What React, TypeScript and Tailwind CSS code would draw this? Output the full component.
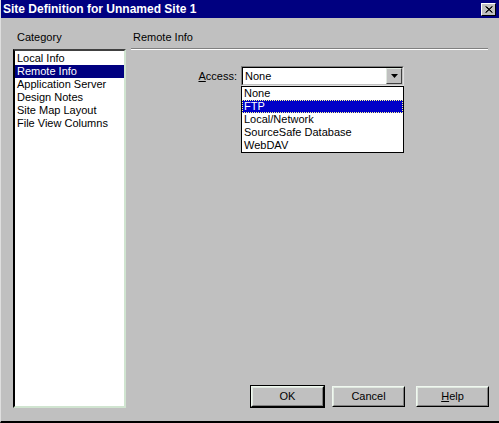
import React from 'react';

const categories = [
  'Local Info',
  'Remote Info',
  'Application Server',
  'Design Notes',
  'Site Map Layout',
  'File View Columns',
];

const accessOptions = ['None', 'FTP', 'Local/Network', 'SourceSafe Database', 'WebDAV'];

// Win9x-style raised push button
function PushButton({ children, isDefault = false, className = '' }: { children: React.ReactNode; isDefault?: boolean; className?: string }) {
  return (
    <div className={`${isDefault ? 'border border-black' : 'border border-transparent'} ${className}`}>
      <div className="h-[21px] border border-t-[#f0f8f0] border-l-[#f0f8f0] border-r-black border-b-black">
        <div className="h-full flex items-center justify-center border border-t-[#dfe8df] border-l-[#dfe8df] border-r-[#808080] border-b-[#808080] text-black">
          {children}
        </div>
      </div>
    </div>
  );
}

export default function App() {
  return (
    <div
      className="w-[499px] h-[423px] bg-[#c0c0c0] flex flex-col border-b-2 border-b-black border-l border-l-[#dfdfdf] text-[11px] leading-[13px] text-black select-none overflow-hidden"
      style={{ fontFamily: '"Liberation Sans", Arial, sans-serif' }}
    >
      {/* Title bar */}
      <div className="h-[18px] bg-[#000080] flex items-center justify-between pl-[2px] pr-[3px] shrink-0">
        <span className="text-white font-bold text-[12px] leading-[14px]">Site Definition for Unnamed Site 1</span>
        <div className="w-[15px] h-[13px] bg-[#c0c0c0] border border-t-white border-l-white border-r-black border-b-black flex items-center justify-center">
          <svg width="8" height="7" viewBox="0 0 8 7">
            <path d="M0.5 0.5 L7 6.5 M1.5 0.5 L7.5 6.5 M7 0.5 L0.5 6.5 M7.5 0.5 L1 6.5" stroke="black" strokeWidth="1" />
          </svg>
        </div>
      </div>

      {/* Body */}
      <div className="flex-1 flex">
        {/* Category column */}
        <div className="ml-[12px] w-[113px] flex flex-col pt-[13px] pb-[13px]">
          <div className="h-[18px] pl-[4px]">Category</div>
          <div className="flex-1 bg-white border-2 border-t-[#404040] border-l-black border-r-[#d0e4d0] border-b-[#d0e4d0] pt-[1px]">
            {categories.map((c, i) => (
              <div
                key={c}
                className={`h-[13px] pl-[2px] whitespace-nowrap ${i === 1 ? 'bg-[#000080] text-white' : ''}`}
              >
                {c}
              </div>
            ))}
          </div>
        </div>

        {/* Right panel */}
        <div className="ml-[5px] flex-1 flex flex-col pt-[13px] pb-[13px] pr-[9px]">
          <div className="h-[17px] pl-[2px]">Remote Info</div>
          <div className="w-[357px] border-t border-t-[#808080] border-b border-b-white" />

          <div className="mt-[16px] flex items-center">
            <div className="w-[110px] pr-[4px] text-right">
              <span className="underline">A</span>ccess:
            </div>
            <div className="relative w-[163px]">
              <div className="h-[20px] border border-t-[#808080] border-l-[#808080] border-r-[#dfdfdf] border-b-[#dfdfdf]">
                <div className="h-full bg-white flex items-center justify-between border border-t-black border-l-black border-r-[#c0c0c0] border-b-[#c0c0c0]">
                  <span className="pl-[2px]">None</span>
                  <div className="w-[16px] h-[16px] bg-[#c0c0c0] border border-t-[#dfe8df] border-l-[#dfe8df] border-r-[#404040] border-b-[#404040] flex items-center justify-center">
                    <svg width="7" height="4" viewBox="0 0 7 4">
                      <path d="M0 0 H7 L3.5 4 Z" fill="black" />
                    </svg>
                  </div>
                </div>
              </div>
              {/* Open dropdown list */}
              <div className="absolute left-0 top-full w-full bg-white border border-black">
                {accessOptions.map((o, i) => (
                  <div
                    key={o}
                    className={`h-[13px] pl-[2px] whitespace-nowrap ${
                      i === 1 ? 'bg-[#0000c8] text-white outline outline-1 outline-dotted outline-offset-[-1px] outline-[#ffff90]' : ''
                    }`}
                  >
                    {o}
                  </div>
                ))}
              </div>
            </div>
          </div>

          <div className="flex-1" />

          <div className="flex justify-end">
            <PushButton isDefault className="w-[75px]">OK</PushButton>
            <PushButton className="w-[75px] ml-[6px]">Cancel</PushButton>
            <PushButton className="w-[75px] ml-[9px]">
              <span><span className="underline">H</span>elp</span>
            </PushButton>
          </div>
        </div>
      </div>
    </div>
  );
}
